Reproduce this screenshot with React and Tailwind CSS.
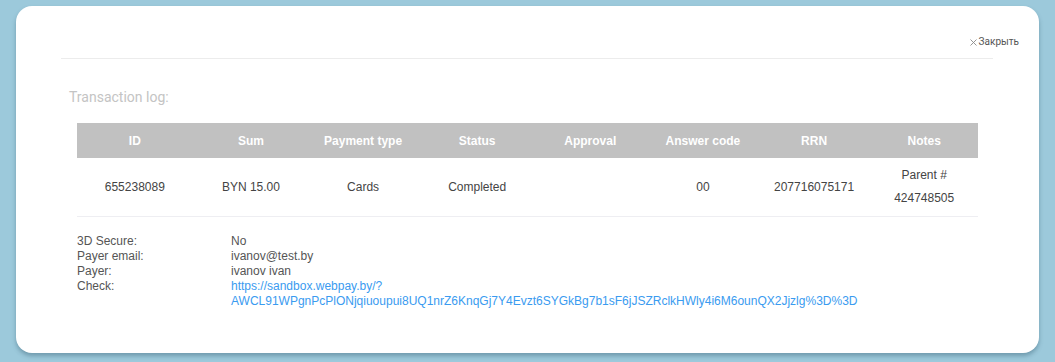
export default function App() {
  const headers = ["ID", "Sum", "Payment type", "Status", "Approval", "Answer code", "RRN", "Notes"];
  // per-column left padding so centres line up with the original
  const pads = ["pl-[3px]", "pl-[10px]", "pl-[9px]", "pl-[12px]", "pl-[13px]", "pl-[13px]", "pl-[10px]", "pl-[5px]"];
  const row = ["655238089", "BYN 15.00", "Cards", "Completed", "", "00", "207716075171"];
  const details = [
    ["3D Secure:", "No"],
    ["Payer email:", "ivanov@test.by"],
    ["Payer:", "ivanov ivan"],
  ];

  return (
    <div className="min-h-[362px] bg-[#9cc9db] px-[16px] pt-[6px] pb-[9px]">
      <div className="h-[347px] rounded-[16px] bg-white shadow-[0_3px_4px_rgba(60,100,120,0.45)] pl-[45px] pr-[20px]">
        <div className="flex justify-end pt-[30px] h-[52px]">
          <button className="flex items-center gap-[2px] h-[12px] text-[10px] leading-[12px] text-[#555] font-['Roboto',sans-serif]">
            <svg width="7" height="7" viewBox="0 0 7 7" className="mt-[1px]">
              <path d="M0.5 0.5L6.5 6.5M6.5 0.5L0.5 6.5" stroke="#8a8a8a" strokeWidth="0.9" />
            </svg>
            <span>Закрыть</span>
          </button>
        </div>
        <div className="mr-[26px] border-t border-[#ececec]" />

        <h2 className="mt-[29px] ml-[8px] text-[14px] leading-[18px] text-[#c4c4c4] font-['Roboto',sans-serif]">
          Transaction log:
        </h2>

        <div className="ml-[16px] mr-[42px] mt-[17px] font-['Liberation_Sans',Arial,sans-serif]">
          <table className="w-[901px] table-fixed border-collapse text-[12px]">
            <thead>
              <tr className="bg-[#c1c1c1] h-[35px]">
                {headers.map((h, i) => (
                  <th key={h} className={`${pads[i]} font-bold text-white text-center`}>{h}</th>
                ))}
              </tr>
            </thead>
            <tbody>
              <tr className="border-b border-[#eeeef2] text-[#444]">
                {row.map((c, i) => (
                  <td key={i} className={`${pads[i]} text-center`}>{c}</td>
                ))}
                <td className={`${pads[7]} text-center leading-[23px] py-[6px]`}>
                  Parent #
                  <br />
                  424748505
                </td>
              </tr>
            </tbody>
          </table>

          <div className="mt-[17px] text-[12px] leading-[15px] text-[#555]">
            {details.map(([k, v]) => (
              <div key={k} className="flex">
                <div className="w-[154px]">{k}</div>
                <div>{v}</div>
              </div>
            ))}
            <div className="flex">
              <div className="w-[154px]">Check:</div>
              <a href="#" className="text-[#3a9bf0]">
                https://sandbox.webpay.by/?
                <br />
                AWCL91WPgnPcPlONjqiuoupui8UQ1nrZ6KnqGj7Y4Evzt6SYGkBg7b1sF6jJSZRclkHWly4i6M6ounQX2Jjzlg%3D%3D
              </a>
            </div>
          </div>
        </div>
      </div>
    </div>
  );
}
